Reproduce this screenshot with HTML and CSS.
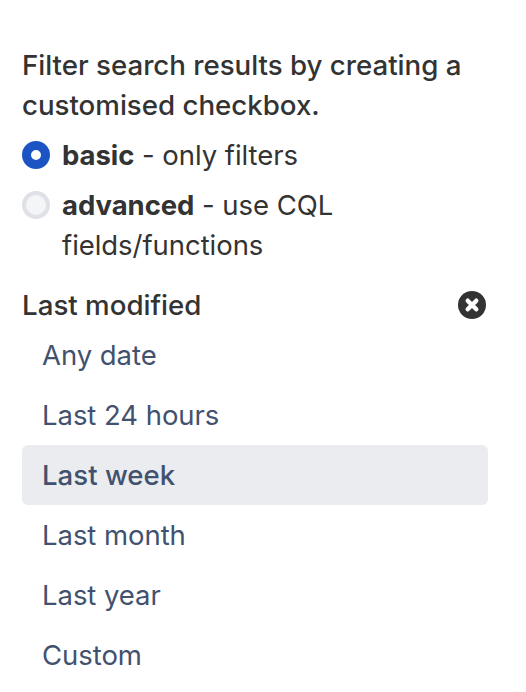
FILE: index.html
```html
<!DOCTYPE html>
<html lang="en">
<head>
<meta charset="utf-8">
<title>Filter</title>
<link rel="stylesheet" href="styles.css">
</head>
<body>
<main class="panel">
  <p class="intro">Filter search results by creating a customised checkbox.</p>
  <div class="radios">
    <div class="radio-row">
      <span class="radio radio-on"></span>
      <span class="radio-label"><b>basic</b> - only filters</span>
    </div>
    <div class="radio-row">
      <span class="radio radio-off"></span>
      <span class="radio-label"><b>advanced</b> - use CQL fields/functions</span>
    </div>
  </div>
  <div class="head">
    <span class="head-title">Last modified</span>
    <svg class="clear" viewBox="0 0 28 28" width="28" height="28" aria-hidden="true">
      <circle cx="14" cy="14" r="14" fill="#333333"/>
      <path d="M9.7 9.7 18.3 18.3M18.3 9.7 9.7 18.3" stroke="#fff" stroke-width="4.4" stroke-linecap="round"/>
    </svg>
  </div>
  <ul class="options">
    <li class="option">Any date</li>
    <li class="option">Last 24 hours</li>
    <li class="option option-active">Last week</li>
    <li class="option">Last month</li>
    <li class="option">Last year</li>
    <li class="option">Custom</li>
  </ul>
</main>
</body>
</html>
```
FILE: styles.css
```css
* { box-sizing: border-box; }
html, body { margin: 0; background: #fff; }
body {
  font-family: Inter, "Liberation Sans", sans-serif;
  font-size: 27.5px;
  line-height: 40px;
  color: #333333;
  overflow: hidden;
  height: 692px;
}
.panel { padding: 45px 38px 0 22px; }
.intro { margin: 0 0 10px; font-size: 27.7px; font-weight: 500; letter-spacing: -0.02px; }
.radios { display: flex; flex-direction: column; gap: 10px; }
.radio-row { display: flex; align-items: flex-start; gap: 12px; }
.radio {
  flex: none;
  width: 28px;
  height: 28px;
  margin-top: 6px;
  border-radius: 50%;
}
.radio-on { background: #fff; border: 9px solid #1c54c4; }
.radio-off { background: #f4f5f7; border: 4px solid #dfe1e6; }
.radio-label { letter-spacing: -0.05px; }
.radio-label b { font-weight: 700; }
.head {
  display: flex;
  justify-content: space-between;
  align-items: center;
  margin-top: 20px;
  padding-right: 2px;
  height: 40px;
}
.head-title { font-size: 27.7px; font-weight: 500; }
.options { list-style: none; margin: 0; padding: 0; letter-spacing: -0.05px; }
.option {
  height: 60px;
  padding: 10px 20px 0;
  color: #42526e;
  border-radius: 6px;
}
.option-active { background: #ebecf0; font-size: 27.6px; font-weight: 500; letter-spacing: 0; }
```
